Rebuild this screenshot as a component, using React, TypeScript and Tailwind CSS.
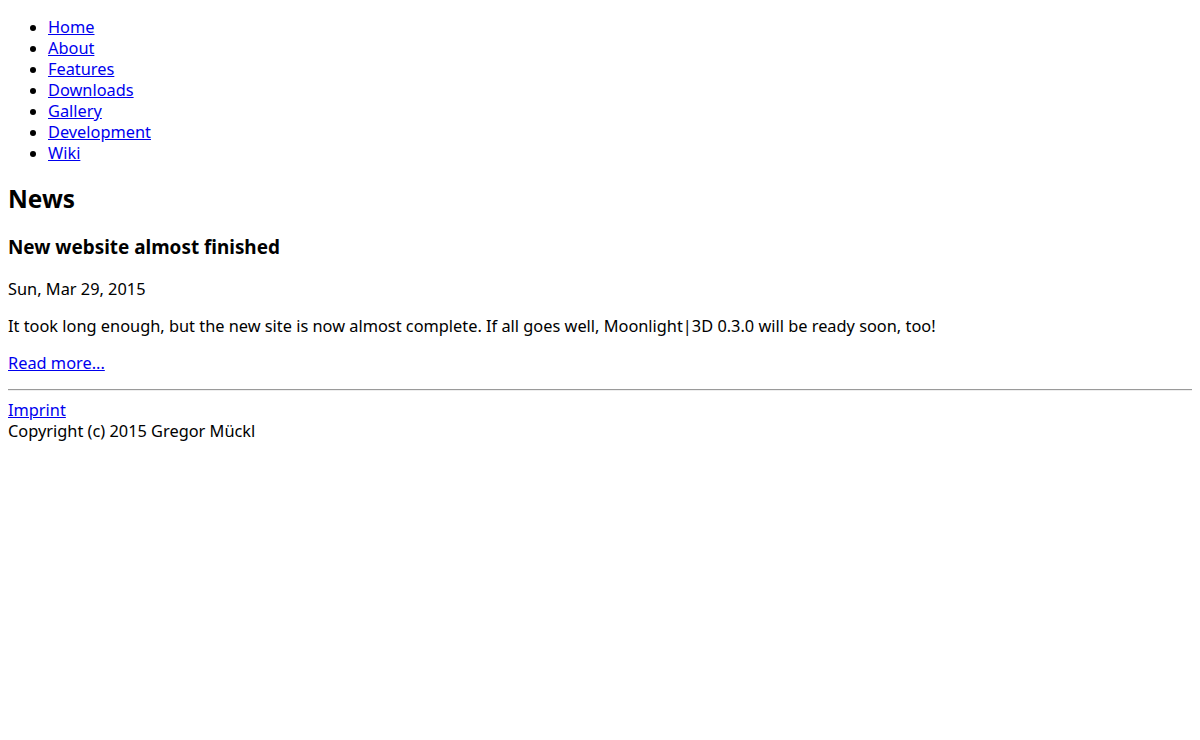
const navItems = ['Home', 'About', 'Features', 'Downloads', 'Gallery', 'Development', 'Wiki'];

const link = 'text-[#0000ee] underline';

export default function App() {
  return (
    <div className="m-2 font-['Noto_Sans',sans-serif] text-[16.35px] leading-[21px] text-black">
      <ul className="mt-[17px] mb-[15px] list-disc pl-10">
        {navItems.map((item) => (
          <li key={item}>
            <a href="#" className={link}>
              {item}
            </a>
          </li>
        ))}
      </ul>
      <h2 className="mt-[19px] mb-5 text-[24.4px] leading-[32px] font-bold">News</h2>
      <h3 className="my-5 text-[18.9px] leading-[24px] font-bold">New website almost finished</h3>
      <p className="my-4">Sun, Mar 29, 2015</p>
      <p className="my-4">
        It took long enough, but the new site is now almost complete. If all goes well, Moonlight|3D 0.3.0 will be ready
        soon, too!
      </p>
      <p className="mt-4 mb-[15px]">
        <a href="#" className={link}>
          Read more...
        </a>
      </p>
      <hr className="mt-0 mb-[9px] border-t border-b border-t-[#9a9a9a] border-b-[#eeeeee]" />
      <a href="#" className={link}>
        Imprint
      </a>
      <br />
      Copyright (c) 2015 Gregor Mückl
    </div>
  );
}
